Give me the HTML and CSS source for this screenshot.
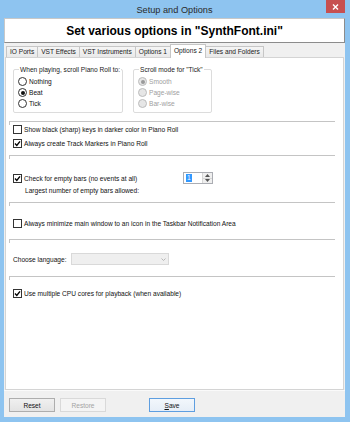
FILE: index.html
```html
<!DOCTYPE html>
<html>
<head>
<meta charset="utf-8">
<link rel="stylesheet" href="styles.css">
</head>
<body>
<div class="window">
  <div class="titlebar">
    <span class="title">Setup and Options</span>
    <div class="close"><svg width="7" height="6" viewBox="0 0 7 6"><path d="M1 0.5 L6 5.5 M6 0.5 L1 5.5" stroke="#fff" stroke-width="1.4"/></svg></div>
  </div>
  <div class="client">
    <div class="header">Set various options in "SynthFont.ini"</div>
    <div class="tabs">
      <div class="tab">IO Ports</div>
      <div class="tab">VST Effects</div>
      <div class="tab">VST Instruments</div>
      <div class="tab">Options 1</div>
      <div class="tab active">Options 2</div>
      <div class="tab">Files and Folders</div>
    </div>
    <div class="page">
      <div class="groups">
        <div class="group g1">
          <span class="legend">When playing, scroll Piano Roll to:</span>
          <div class="radio"><span class="dot"></span>Nothing</div>
          <div class="radio"><span class="dot on"></span>Beat</div>
          <div class="radio"><span class="dot"></span>Tick</div>
        </div>
        <div class="group g2">
          <span class="legend">Scroll mode for "Tick"</span>
          <div class="radio dis"><span class="dot on"></span>Smooth</div>
          <div class="radio dis"><span class="dot"></span>Page-wise</div>
          <div class="radio dis"><span class="dot"></span>Bar-wise</div>
        </div>
      </div>
      <div class="sep s1"></div>
      <div class="row r1"><span class="cb"></span>Show black (sharp) keys in darker color in Piano Roll</div>
      <div class="row r2"><span class="cb on"><svg width="7" height="7" viewBox="0 0 7 7"><path d="M1 3.6 L2.8 5.4 L6 1.4" fill="none" stroke="#000" stroke-width="1.4"/></svg></span>Always create Track Markers in Piano Roll</div>
      <div class="sep s2"></div>
      <div class="row r3 spinrow"><span class="cb on"><svg width="7" height="7" viewBox="0 0 7 7"><path d="M1 3.6 L2.8 5.4 L6 1.4" fill="none" stroke="#000" stroke-width="1.4"/></svg></span>Check for empty bars (no events at all)
        <div class="spin"><div class="edit"><span class="sel">1</span></div><div class="arrows"><span class="up"><svg width="5" height="3" viewBox="0 0 5 3"><path d="M0 3 L2.5 0 L5 3Z" fill="#555"/></svg></span><span class="down"><svg width="5" height="3" viewBox="0 0 5 3"><path d="M0 0 L2.5 3 L5 0Z" fill="#555"/></svg></span></div></div>
      </div>
      <div class="row sub">Largest number of empty bars allowed:</div>
      <div class="sep s3"></div>
      <div class="row r4"><span class="cb"></span>Always minimize main window to an icon in the Taskbar Notification Area</div>
      <div class="sep s4"></div>
      <div class="row r5"><span class="lbl">Choose language:</span><div class="combo"><svg width="5" height="3" viewBox="0 0 5 3"><path d="M0.5 0.5 L2.5 2.5 L4.5 0.5" fill="none" stroke="#b0b0b0" stroke-width="0.9"/></svg></div></div>
      <div class="sep s5"></div>
      <div class="row r6"><span class="cb on"><svg width="7" height="7" viewBox="0 0 7 7"><path d="M1 3.6 L2.8 5.4 L6 1.4" fill="none" stroke="#000" stroke-width="1.4"/></svg></span>Use multiple CPU cores for playback (when available)</div>
    </div>
    <div class="footer">
      <div class="btn">Reset</div>
      <div class="btn disabled">Restore</div>
      <div class="btn default"><span class="u">S</span>ave</div>
    </div>
  </div>
</div>
</body>
</html>
```
FILE: styles.css
```css
* { box-sizing: border-box; margin: 0; padding: 0; }
html, body { width: 350px; height: 422px; overflow: hidden; }
body {
  font-family: "Liberation Sans", Arial, sans-serif;
  font-size: 6.6px;
  color: #111;
  background: #8ec4f0;
}
.window {
  width: 350px;
  height: 422px;
  display: flex;
  flex-direction: column;
  padding: 0 5px 5px 4px;
}
.titlebar {
  height: 18px;
  flex: none;
  display: flex;
  align-items: center;
  justify-content: center;
  position: relative;
}
.title { font-size: 9.2px; color: #2a2a2a; margin-top: 1px; }
.close {
  position: absolute;
  right: 0;
  top: 0;
  width: 19px;
  height: 13px;
  background: #c75050;
  display: flex;
  align-items: center;
  justify-content: center;
}
.client {
  flex: 1;
  background: #f0f0f0;
  display: flex;
  flex-direction: column;
}
.header {
  height: 25px;
  flex: none;
  background: #fff;
  border: 1px solid #c8c8c8;
  border-right-color: #8c8c8c;
  border-bottom-color: #8c8c8c;
  display: flex;
  align-items: center;
  justify-content: center;
  font-size: 12px;
  font-weight: bold;
  color: #000;
}
.tabs {
  height: 14px;
  flex: none;
  display: flex;
  align-items: flex-end;
  padding-left: 2px;
}
.tab {
  height: 11px;
  line-height: 10px;
  padding: 0 3px;
  border: 1px solid #c6c6c6;
  border-bottom: none;
  background: linear-gradient(#f5f5f5, #e9e9e9);
  margin-right: -1px;
  color: #1a1a1a;
}
.tab.active {
  line-height: 11px;
  background: #fff;
  position: relative;
  z-index: 1;
  margin-bottom: -1px;
  height: 14px;
}
.page {
  flex: 1;
  background: #fff;
  border: 1px solid #d4d4d4;
  margin: 0 1px 0 1px;
  display: flex;
  flex-direction: column;
}
.groups {
  display: flex;
  margin-top: 11px;
  padding-left: 7px;
}
.group {
  position: relative;
  border: 1px solid #dcdcdc;
  border-radius: 2px;
  height: 44px;
  padding: 6px 0 0 4px;
}
.g1 { width: 110px; }
.g2 { width: 79px; margin-left: 10px; }
.legend {
  position: absolute;
  top: -5px;
  left: 5px;
  background: #fff;
  padding: 0 1px;
  line-height: 9px;
  color: #1a1a1a;
}
.radio {
  height: 11px;
  display: flex;
  align-items: center;
  gap: 2px;
}
.dot {
  width: 9px;
  height: 9px;
  border: 1px solid #333;
  border-radius: 50%;
  background: #fff;
  display: flex;
  align-items: center;
  justify-content: center;
}
.dot.on::after {
  content: "";
  width: 4px;
  height: 4px;
  border-radius: 50%;
  background: #111;
}
.radio.dis { color: #a0a0a0; }
.radio.dis .dot { border-color: #bcbcbc; background: #e6e6e6; }
.radio.dis .dot.on::after { background: #9a9a9a; }
.sep {
  margin-left: 3px;
  width: 326px;
  height: 4px;
  border-top: 1px solid #c4c4c4;
  border-left: 1px solid #c4c4c4;
  flex: none;
}
.s1 { margin-top: 8px; }
.s2 { margin-top: 6px; }
.s3 { margin-top: 6px; }
.s4 { margin-top: 10px; }
.s5 { margin-top: 11px; }
.row {
  height: 12px;
  display: flex;
  align-items: center;
  gap: 2px;
  padding-left: 7px;
  flex: none;
}
.r1 { margin-top: -2px; }
.r2 { margin-top: 2px; }
.r3 { margin-top: 13px; }
.r4 { margin-top: 11px; }
.r5 { margin-top: 10px; }
.r6 { margin-top: 7px; }
.sub { padding-left: 19px; }
.cb {
  width: 9px;
  height: 9px;
  border: 1px solid #333;
  background: #fff;
  display: flex;
  align-items: center;
  justify-content: center;
  flex: none;
}
.spinrow { width: 207px; }
.spin {
  margin-left: auto;
  width: 30px;
  height: 12px;
  border: 1px solid #abadb3;
  display: flex;
}
.edit { flex: 1; display: flex; align-items: center; padding-left: 2px; }
.sel { background: #3399ff; color: #fff; line-height: 8px; padding: 0 1px; }
.arrows {
  width: 10px;
  display: flex;
  flex-direction: column;
  border-left: 1px solid #d6d6d6;
}
.arrows span {
  flex: 1;
  display: flex;
  align-items: center;
  justify-content: center;
  background: #efefef;
}
.arrows .up { border-bottom: 1px solid #d6d6d6; }
.lbl { width: 56px; flex: none; }
.combo {
  width: 98px;
  height: 12px;
  border: 1px solid #d9d9d9;
  background: #efefef;
  display: flex;
  align-items: center;
  justify-content: flex-end;
  padding-right: 2px;
}
.footer {
  height: 27px;
  flex: none;
  display: flex;
  padding: 7px 0 0 5px;
  border-top: 1px solid #fafafa;
}
.btn {
  width: 46px;
  height: 14px;
  border: 1px solid #adadad;
  background: linear-gradient(#f0f0f0, #e3e3e3);
  display: flex;
  align-items: center;
  justify-content: center;
  margin-right: 5px;
  color: #111;
}
.btn.disabled { border-color: #d9d9d9; background: #f4f4f4; color: #a3a3a3; }
.btn.default { margin-left: 38px; border-color: #5e9ee0; background: linear-gradient(#f2f7fc, #e6eef7); }
.u { text-decoration: underline; }
```
